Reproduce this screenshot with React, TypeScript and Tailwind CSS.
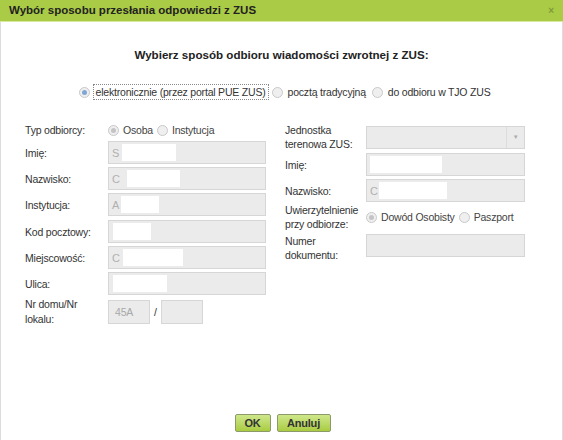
import type { ReactNode } from "react";

const font = { fontFamily: '"Liberation Sans", Tahoma, Arial, sans-serif' };

function Radio({ checked, blue }: { checked?: boolean; blue?: boolean }) {
  return (
    <span className="inline-flex h-[11px] w-[11px] shrink-0 items-center justify-center rounded-full border border-[#c9c9c9] bg-[#efefef]">
      {checked && (
        <span className={`h-[5px] w-[5px] rounded-full ${blue ? "bg-[#7fa7d6]" : "bg-[#c4c4c4]"}`} />
      )}
    </span>
  );
}

// redacted value: a stray grey letter then a white box
function Field({ ch, pad = 0, w, width = "w-[158px]" }: { ch?: string; pad?: number; w?: number; width?: string }) {
  return (
    <div className={`flex h-[23px] ${width} items-center border border-[#d6d6d6] bg-[#ebebeb] pl-[3px]`}>
      {ch && <span className="text-[11px] text-[#b0b0b0]">{ch}</span>}
      {w ? <span className="h-[17px] bg-white" style={{ width: w, marginLeft: pad }} /> : null}
    </div>
  );
}

function Row({ label, children, lw = "w-[83px]", className = "", lh = "leading-[14px]" }: { label: ReactNode; children: ReactNode; lw?: string; className?: string; lh?: string }) {
  return (
    <div className={`flex items-center ${className}`}>
      <div className={`${lw} ${lh} shrink-0`}>{label}</div>
      {children}
    </div>
  );
}

export default function App() {
  return (
    <div className="flex h-[440px] w-[563px] flex-col bg-white text-[10.5px] tracking-[-0.2px] text-[#333]" style={font}>
      <div className="flex h-[22px] items-center justify-between border-b border-[#d9eaa0] bg-[#aacb45] pl-[9px] pr-[9px] tracking-normal">
        <span className="text-[11.5px] font-bold text-[#222]">Wybór sposobu przesłania odpowiedzi z ZUS</span>
        <span className="text-[10px] font-bold text-[#7f9b3a]">×</span>
      </div>
      <div className="flex flex-1 flex-col border-x border-[#dcdcdc]">
        <div className="mt-[24px] text-center text-[11.6px] font-bold tracking-normal text-[#222]">
          Wybierz sposób odbioru wiadomości zwrotnej z ZUS:
        </div>
        <div className="mt-[21px] flex items-center justify-center gap-[3px] pl-[6px]">
          <Radio checked blue />
          <span className="border border-dotted border-[#888] px-[2px] leading-[14px]">elektronicznie (przez portal PUE ZUS)</span>
          <Radio />
          <span className="ml-[2px] mr-[3px]">pocztą tradycyjną</span>
          <Radio />
          <span className="ml-[2px]">do odbioru w TJO ZUS</span>
        </div>

        <div className="mt-[23px] flex items-start gap-[19px] pl-[24px]">
          <div className="flex flex-col gap-[3px]">
            <Row label="Typ odbiorcy:" className="mb-[1px] h-[14px]">
              <div className="flex items-center gap-[4px] text-[#444]">
                <Radio checked />
                <span>Osoba</span>
                <Radio />
                <span>Instytucja</span>
              </div>
            </Row>
            <Row label="Imię:"><Field ch="S" pad={3} w={54} /></Row>
            <Row label="Nazwisko:"><Field ch="C" pad={7} w={53} /></Row>
            <Row label="Instytucja:"><Field ch="A" pad={2} w={38} /></Row>
            <Row label="Kod pocztowy:" className="mt-[1px]"><Field pad={1} w={38} /></Row>
            <Row label="Miejscowość:"><Field ch="C" pad={3} w={60} /></Row>
            <Row label="Ulica:"><Field pad={1} w={54} /></Row>
            <Row label={<>Nr domu/Nr<br />lokalu:</>} lh="leading-[15px]" className="-mt-[1px]">
              <div className="flex h-[24px] w-[42px] items-center border border-[#d6d6d6] bg-[#ebebeb] pl-[6px] text-[#a8a8a8]">45A</div>
              <span className="mx-[4px]">/</span>
              <div className="h-[24px] w-[42px] border border-[#d6d6d6] bg-[#ebebeb]" />
            </Row>
          </div>

          <div className="flex flex-col">
            <Row label={<>Jednostka<br />terenowa ZUS:</>} lw="w-[81px]" lh="leading-[14px]">
              <div className="flex h-[23px] w-[159px] items-center justify-end border border-[#d6d6d6] bg-[#ebebeb]">
                <div className="flex h-full w-[18px] items-center justify-center border-l border-[#dcdcdc]">
                  <span className="text-[6px] text-[#aaa]">▼</span>
                </div>
              </div>
            </Row>
            <Row label="Imię:" lw="w-[81px]" className="mt-[2px]"><Field width="w-[159px]" w={72} /></Row>
            <Row label="Nazwisko:" lw="w-[81px]" className="mt-[3px]"><Field width="w-[159px]" ch="C" pad={1} w={68} /></Row>
            <Row label={<>Uwierzytelnienie<br />przy odbiorze:</>} lw="w-[81px]" lh="leading-[13.5px]" className="mt-[2px]">
              <div className="flex items-center gap-[4px] text-[#444]">
                <Radio checked />
                <span>Dowód Osobisty</span>
                <Radio />
                <span>Paszport</span>
              </div>
            </Row>
            <div className="mt-[3px] flex items-start">
              <div className="mt-[1px] w-[81px] shrink-0 leading-[13.5px]">Numer<br />dokumentu:</div>
              <div className="h-[23px] w-[159px] border border-[#d6d6d6] bg-[#ebebeb]" />
            </div>
          </div>
        </div>

        <div className="mt-auto mb-[8px] flex justify-center gap-[6px] pl-[2px]">
          <button className="h-[18px] w-[36px] rounded-[2px] border border-[#8c9a6a] bg-gradient-to-b from-[#cfe78a] to-[#a9cc3f] text-[11px] font-bold text-[#333]">OK</button>
          <button className="h-[18px] w-[54px] rounded-[2px] border border-[#8c9a6a] bg-gradient-to-b from-[#cfe78a] to-[#a9cc3f] text-[11px] font-bold text-[#333]">Anuluj</button>
        </div>
      </div>
    </div>
  );
}
